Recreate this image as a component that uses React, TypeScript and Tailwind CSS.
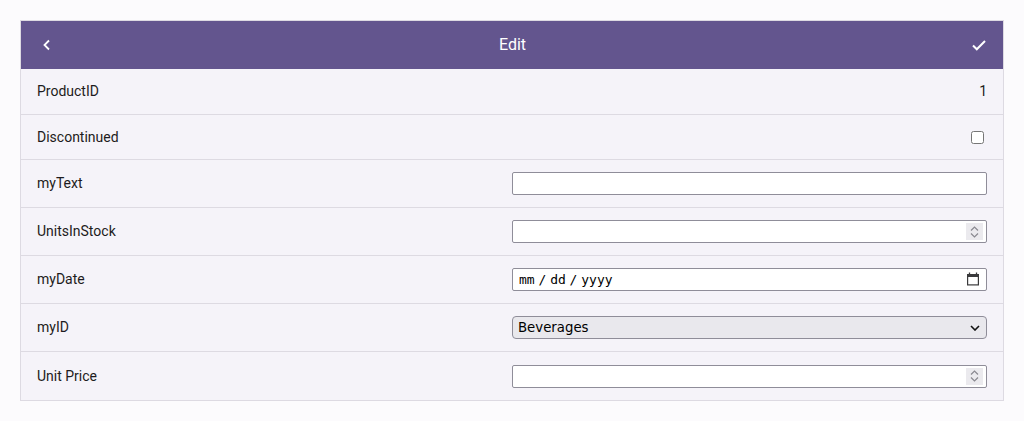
import React from "react";

const rows = ["myText", "UnitsInStock", "myDate", "myID", "Unit Price"];

const box =
  "w-full h-[23px] rounded-[2px] border border-[#8f8d99] bg-white px-[6px] text-[13px] text-black outline-none";

function Spinner() {
  return (
    <span className="pointer-events-none absolute right-[4px] top-[3px] flex h-[17px] w-[17px] flex-col items-center justify-center gap-[2px] bg-[#ebeaee]">
      <svg width="9" height="5" viewBox="0 0 9 5">
        <path d="M1 4.5 4.5 1 8 4.5" fill="none" stroke="#8a8990" strokeWidth="1.2" />
      </svg>
      <svg width="9" height="5" viewBox="0 0 9 5">
        <path d="M1 .5 4.5 4 8 .5" fill="none" stroke="#8a8990" strokeWidth="1.2" />
      </svg>
    </span>
  );
}

function Field({ name }: { name: string }) {
  if (name === "UnitsInStock" || name === "Unit Price")
    return (
      <div className="relative">
        <input
          type="number"
          className={box + " [appearance:textfield] [&::-webkit-inner-spin-button]:appearance-none"}
          style={{ fontFamily: "'DejaVu Sans', sans-serif" }}
        />
        <Spinner />
      </div>
    );
  if (name === "myDate")
    return (
      <div className="relative">
        <input
          type="text"
          placeholder="mm / dd / yyyy"
          className={box + " px-[5px] [word-spacing:-4px] placeholder:text-black"}
          style={{ fontFamily: "'DejaVu Sans Mono', monospace" }}
        />
        <svg
          width="14"
          height="14"
          viewBox="0 0 14 14"
          className="pointer-events-none absolute right-[7px] top-[4px]"
        >
          <path d="M3.5 0.5v2M10.5 0.5v2" stroke="#3a3a3c" strokeWidth="1.3" />
          <rect x="1" y="2" width="12" height="3" fill="#3a3a3c" />
          <rect x="1.6" y="2.6" width="10.8" height="10.3" fill="none" stroke="#3a3a3c" strokeWidth="1.2" />
        </svg>
      </div>
    );
  if (name === "myID")
    return (
      <div className="relative">
        <select
          className="w-full h-[23px] appearance-none rounded-[4px] border border-[#8f8d99] bg-[#e9e8ed] pl-[5px] text-[13.3px] text-black outline-none"
          style={{ fontFamily: "'DejaVu Sans', sans-serif" }}
          defaultValue="Beverages"
        >
          <option>Beverages</option>
          <option>Condiments</option>
          <option>Confections</option>
        </select>
        <svg
          width="10"
          height="6"
          viewBox="0 0 10 6"
          className="pointer-events-none absolute right-[7px] top-[9px]"
        >
          <path d="M1 1l4 4 4-4" fill="none" stroke="#111" strokeWidth="1.6" />
        </svg>
      </div>
    );
  return <input type="text" className={box} style={{ fontFamily: "'DejaVu Sans', sans-serif" }} />;
}

export default function App() {
  return (
    <main
      className="min-h-screen bg-[#fcfbfd] px-[20px] pt-[20px]"
      style={{ fontFamily: "Roboto, 'Liberation Sans', sans-serif" }}
    >
      <div className="w-[984px] border border-[#dddae2] bg-[#f5f3f9]">
        <div className="flex h-[48px] items-center justify-between bg-[#63558e] px-[16px] text-white">
          <svg width="16" height="16" viewBox="0 0 16 16" className="ml-[2px]">
            <path d="M10 3.5 5.5 8l4.5 4.5" fill="none" stroke="white" strokeWidth="1.8" />
          </svg>
          <span className="text-[16px]">Edit</span>
          <svg width="18" height="18" viewBox="0 0 18 18" className="mr-[-1px]">
            <path d="M3 9.5l3.8 3.8L15 5" fill="none" stroke="white" strokeWidth="2" />
          </svg>
        </div>

        <div className="flex h-[46px] items-center justify-between border-b border-[#dddae2] px-[16px] text-[14px] text-[#1d1b20]">
          <span>ProductID</span>
          <span>1</span>
        </div>
        <div className="flex h-[45px] items-center justify-between border-b border-[#dddae2] px-[16px] text-[14px] text-[#1d1b20]">
          <span>Discontinued</span>
          <input type="checkbox" className="m-0 mr-[3px] h-[13px] w-[13px]" />
        </div>

        {rows.map((r, i) => (
          <div
            key={r}
            className={
              "grid h-[48px] grid-cols-2 items-center px-[16px] text-[14px] text-[#1d1b20] " +
              (i < rows.length - 1 ? "border-b border-[#dddae2]" : "")
            }
          >
            <span>{r}</span>
            <Field name={r} />
          </div>
        ))}
      </div>
    </main>
  );
}
